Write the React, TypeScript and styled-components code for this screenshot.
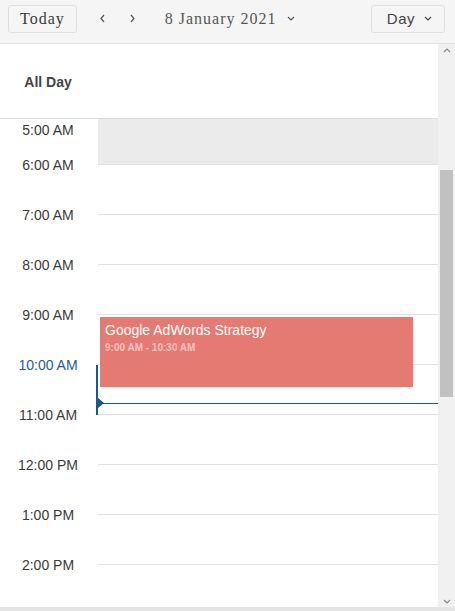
import styled, { createGlobalStyle } from "styled-components";

const GlobalStyle = createGlobalStyle`
  html, body {
    margin: 0;
    padding: 0;
    background: #ffffff;
  }
  * {
    box-sizing: border-box;
  }
`;

const hours = [
  "6:00 AM",
  "7:00 AM",
  "8:00 AM",
  "9:00 AM",
  "10:00 AM",
  "11:00 AM",
  "12:00 PM",
  "1:00 PM",
  "2:00 PM",
];

export const Scheduler = styled.div`
  width: 455px;
  height: 611px;
  display: flex;
  flex-direction: column;
  overflow: hidden;
  font-family: "Liberation Sans", Arial, sans-serif;
  color: #333;
`;

export const Toolbar = styled.div`
  height: 44px;
  flex: 0 0 auto;
  display: flex;
  align-items: center;
  padding: 0 10px 6px 8px;
  background: #f5f5f5;
  border-bottom: 1px solid #e3e3e3;
`;

export const ViewButton = styled.div`
  height: 28px;
  display: flex;
  align-items: center;
  gap: 9px;
  padding: 0 12px 0 15px;
  background: #f5f5f5;
  border: 1px solid #e0e0e0;
  border-radius: 3px;
  color: #444;
  font-family: "Liberation Sans", Arial, sans-serif;
  font-size: 15px;
  letter-spacing: 0.5px;
`;

export const TodayButton = styled.div`
  height: 28px;
  display: flex;
  align-items: center;
  padding: 0 11px;
  background: #f5f5f5;
  border: 1px solid #e0e0e0;
  border-radius: 3px;
  color: #3a3a3a;
  font-family: "Liberation Serif", "Times New Roman", serif;
  font-size: 16px;
  letter-spacing: 1px;
`;

export const NavArrow = styled.span<{ $left: number }>`
  display: flex;
  margin-left: ${({ $left }) => $left}px;
  color: #555;
`;

export const DateLabel = styled.div`
  margin-left: 29px;
  display: flex;
  align-items: center;
  gap: 10px;
  font-family: "Liberation Serif", "Times New Roman", serif;
  font-size: 16px;
  letter-spacing: 1px;
  color: #555;
`;

export const Spacer = styled.div`
  flex: 1;
`;

export const Body = styled.div`
  height: 563px;
  display: flex;
  flex: 0 0 auto;
`;

export const Main = styled.div`
  width: 438px;
  display: flex;
  flex-direction: column;
`;

export const AllDayRow = styled.div`
  height: 75px;
  flex: 0 0 auto;
  display: flex;
  align-items: center;
  border-bottom: 1px solid #dddddd;
`;

export const AllDayLabel = styled.div`
  width: 96px;
  text-align: center;
  font-weight: bold;
  font-size: 14px;
  color: #444;
  margin-top: 2px;
`;

export const Grid = styled.div`
  flex: 1;
  display: flex;
  overflow: hidden;
`;

export const Gutter = styled.div`
  width: 98px;
  flex: 0 0 auto;
  display: flex;
  flex-direction: column;
`;

export const HourLabel = styled.div<{ $h: number; $now?: boolean }>`
  height: ${({ $h }) => $h}px;
  flex: 0 0 auto;
  display: flex;
  align-items: center;
  justify-content: center;
  padding-right: 2px;
  font-size: 14px;
  color: ${({ $now }) => ($now ? "#1f5e8f" : "#3a3a3a")};
`;

export const Slots = styled.div`
  position: relative;
  flex: 1;
  display: flex;
  flex-direction: column;
`;

export const Slot = styled.div<{ $off?: boolean }>`
  height: ${({ $off }) => ($off ? "45px" : "50px")};
  flex: 0 0 auto;
  background: ${({ $off }) => ($off ? "#ebebeb" : "#ffffff")};
  border-top: ${({ $off }) => ($off ? "none" : "1px solid #e2e2e2")};
`;

export const Appointment = styled.div`
  position: absolute;
  top: 198px;
  left: 2px;
  width: 313px;
  height: 70px;
  padding: 4px 5px;
  background: #e57a73;
  color: #ffffff;
`;

export const Subject = styled.div`
  font-size: 14px;
  line-height: 18px;
`;

export const Time = styled.div`
  margin-top: 3px;
  font-size: 10px;
  font-weight: bold;
  color: #f6c3be;
`;

export const NowLine = styled.div`
  position: absolute;
  top: 284px;
  left: -1px;
  right: 0;
  height: 1px;
  background: #1a5a8a;
`;

export const NowTick = styled.div`
  position: absolute;
  top: 246px;
  left: -2px;
  width: 2px;
  height: 50px;
  background: #1a5a8a;
`;

export const NowMarker = styled.div`
  position: absolute;
  top: 278px;
  left: -1px;
  width: 0;
  height: 0;
  border-top: 6px solid transparent;
  border-bottom: 6px solid transparent;
  border-left: 7px solid #1a5a8a;
`;

export const ScrollTrack = styled.div`
  width: 17px;
  display: flex;
  flex-direction: column;
  align-items: center;
  background: #f1f1f1;
`;

export const ScrollArrow = styled.div`
  height: 12px;
  display: flex;
  align-items: center;
  justify-content: center;
  color: #8a8a8a;
`;

export const Thumb = styled.div`
  width: 13px;
  height: 227px;
  margin-top: 114px;
  background: #c1c1c1;
`;

export const Footer = styled.div`
  flex: 1;
  background: #e4e4e4;
`;

const Chevron = ({ dir }: { dir: "left" | "right" | "down" | "up" }) => {
  const d = {
    left: "M5 1 L2 4.5 L5 8",
    right: "M2 1 L5 4.5 L2 8",
    down: "M1 2 L4 5 L7 2",
    up: "M1 5 L4 2 L7 5",
  }[dir];
  const vertical = dir === "left" || dir === "right";
  return (
    <svg width={vertical ? 7 : 8} height={vertical ? 9 : 7} viewBox={vertical ? "0 0 7 9" : "0 0 8 7"}>
      <path d={d} fill="none" stroke="currentColor" strokeWidth="1.2" />
    </svg>
  );
};

export default function App() {
  return (
    <>
      <GlobalStyle />
      <Scheduler>
        <Toolbar>
          <TodayButton>Today</TodayButton>
          <NavArrow $left={22}>
            <Chevron dir="left" />
          </NavArrow>
          <NavArrow $left={23}>
            <Chevron dir="right" />
          </NavArrow>
          <DateLabel>
            8 January 2021
            <Chevron dir="down" />
          </DateLabel>
          <Spacer />
          <ViewButton>
            Day
            <Chevron dir="down" />
          </ViewButton>
        </Toolbar>
        <Body>
          <Main>
            <AllDayRow>
              <AllDayLabel>All Day</AllDayLabel>
            </AllDayRow>
            <Grid>
              <Gutter>
                <HourLabel $h={21}>5:00 AM</HourLabel>
                {hours.map((h) => (
                  <HourLabel key={h} $h={50} $now={h === "10:00 AM"}>
                    {h}
                  </HourLabel>
                ))}
              </Gutter>
              <Slots>
                <Slot $off />
                {hours.map((h) => (
                  <Slot key={h} />
                ))}
                <Appointment>
                  <Subject>Google AdWords Strategy</Subject>
                  <Time>9:00 AM - 10:30 AM</Time>
                </Appointment>
                <NowTick />
                <NowLine />
                <NowMarker />
              </Slots>
            </Grid>
          </Main>
          <ScrollTrack>
            <ScrollArrow>
              <Chevron dir="up" />
            </ScrollArrow>
            <Thumb />
            <Spacer />
            <ScrollArrow>
              <Chevron dir="down" />
            </ScrollArrow>
          </ScrollTrack>
        </Body>
        <Footer />
      </Scheduler>
    </>
  );
}
